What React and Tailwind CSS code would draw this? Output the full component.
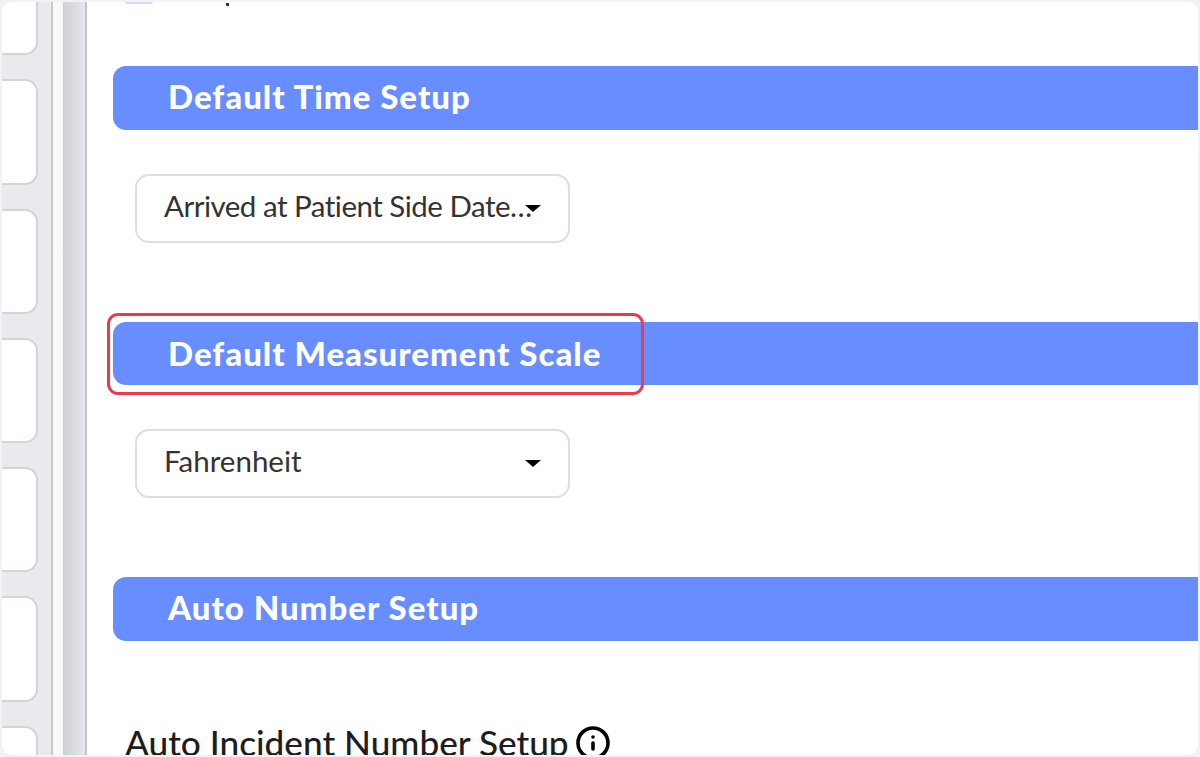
import { Info } from "lucide-react";

const cards = [0, 1, 2, 3, 4, 5, 6];

function Banner({ title, className }) {
  return (
    <div className={`rounded-l-[13px] bg-[#678dff] pl-[55px] flex items-center ${className}`}>
      <h2 className="text-[33px] font-black text-white leading-none tracking-[1px]">{title}</h2>
    </div>
  );
}

function Select({ label, className, labelClass }) {
  return (
    <div className={`w-[435px] h-[69px] ml-[22px] border-2 border-[#dedede] rounded-[14px] bg-white flex items-center pl-[27px] pr-[27px] ${className}`}>
      <span className={`flex-1 min-w-0 -mt-[4px] text-[29.5px] text-[#333] whitespace-nowrap ${labelClass}`}>{label}</span>
      <span className="w-0 h-0 shrink-0 border-x-[8px] border-x-transparent border-t-[7px] border-t-black"></span>
    </div>
  );
}

export default function App() {
  return (
    <div className="h-[757px] bg-[#f1f1f6] p-0.5 font-['Lato',sans-serif]">
      <div className="relative h-[753px] rounded-[10px] overflow-hidden bg-white flex">
        <div className="w-[51px] shrink-0 bg-[#e9eaee] border-r-2 border-[#c9c9cb] overflow-hidden">
          <div className="-mt-[52px] flex flex-col gap-6 w-9">
            {cards.map((c) => (
              <div key={c} className="h-[105.3px] shrink-0 bg-white border-2 border-l-0 border-[#d4d4d6] rounded-r-[13px]"></div>
            ))}
          </div>
        </div>
        <div className="w-2.5 shrink-0 bg-[#f8f8f9]"></div>
        <div className="w-[24px] shrink-0 bg-gradient-to-r from-[#cfd0d3] to-[#e6e7ea] border-r-2 border-[#c4c4c6]"></div>
        <div className="flex-1 min-w-0 pl-[26px] overflow-hidden">
          <div className="h-1 ml-3 flex items-start">
            <span className="w-7 h-0.5 bg-[#d5dcff] rounded-b"></span>
            <span className="w-[3px] h-[3px] ml-[73px] mt-px bg-[#333]"></span>
          </div>
          <div className="pt-[60px]">
            <Banner title="Default Time Setup" className="h-16 pb-1" />
            <Select label="Arrived at Patient Side Date…" labelClass="tracking-[-0.5px]" className="mt-[44px]" />
            <Banner title="Default Measurement Scale" className="h-[63px] mt-[79px]" />
            <Select label="Fahrenheit" className="mt-[44px]" />
            <Banner title="Auto Number Setup" className="h-16 mt-[79px] pb-1" />
            <div className="mt-[84px] ml-3 flex items-center gap-[6px]">
              <h3 className="text-[35.2px] font-medium text-[#1d1d1f] leading-none whitespace-nowrap">Auto Incident Number Setup</h3>
              <Info className="size-[36px] text-black" strokeWidth={2.4} />
            </div>
          </div>
        </div>
        <div className="absolute left-[105px] top-[311px] w-[537px] h-[82px] border-[3px] border-[#ec3a4b] rounded-[11px]"></div>
      </div>
    </div>
  );
}
